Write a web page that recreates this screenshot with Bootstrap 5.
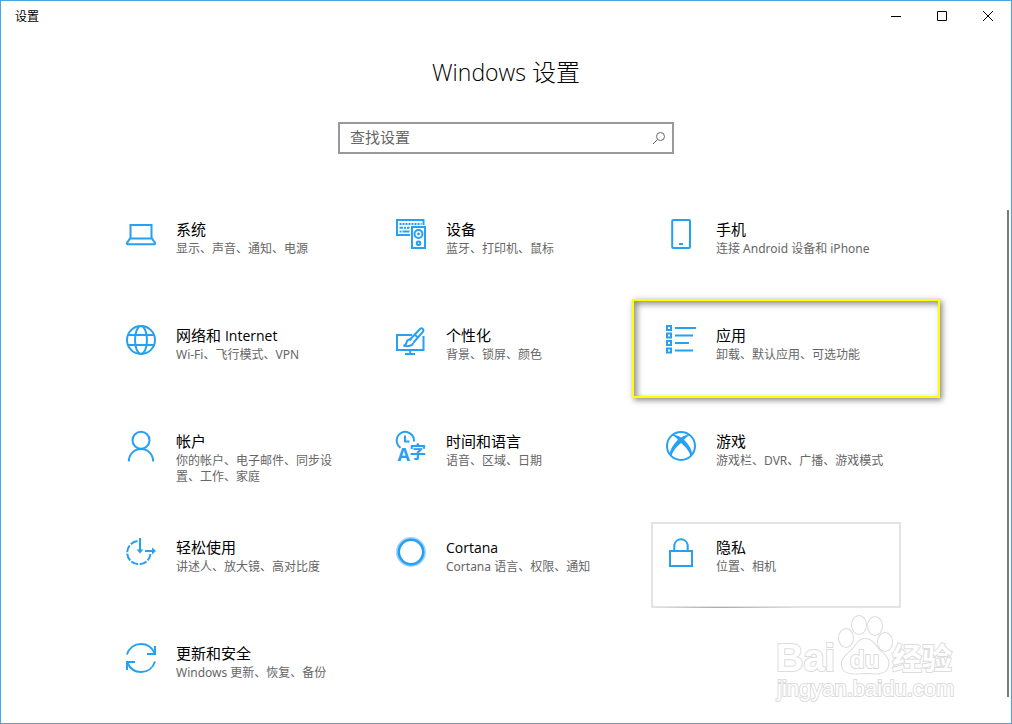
<!DOCTYPE html>
<html lang="zh-CN">
<head>
<meta charset="utf-8">
<meta name="viewport" content="width=device-width, initial-scale=1">
<title>设置</title>
<link href="https://cdn.jsdelivr.net/npm/bootstrap@5.3.0/dist/css/bootstrap.min.css" rel="stylesheet">
<style>
  body { font-family: "Open Sans", "Noto Sans CJK SC", sans-serif; color: #000; background: #fff; }
  .app-window { min-height: 100vh; border: 1px solid #46a6e4; }
  .title-text { font-size: 12px; line-height: 32px; padding-left: 14px; }
  .win-btn { width: 46px; height: 30px; border: 0; background: none; padding: 0; }
  .win-btn svg { width: 10px; height: 10px; fill: none; stroke: #000; display: block; margin: auto; }
  .page-title { font-size: 23px; line-height: 32px; font-weight: 300; margin: 23px 0 34px; }
  .page-title span { font-family: "Noto Sans CJK SC", sans-serif; font-size: 24px; line-height: 24px; }
  .search-box { width: 336px; max-width: 90%; height: 32px; border: 2px solid #999; }
  .search-box input { font-size: 15px; line-height: 20px; border: 0; outline: 0; padding: 0 10px 2px; color: #000; background: none; min-width: 0; }
  .search-box input::placeholder { color: #666; opacity: 1; }
  .search-btn { width: 26px; border: 0; padding: 0; background: none; }
  .search-btn svg { width: 14px; height: 14px; display: block; fill: none; stroke: #666; margin: auto; }
  .tiles { display: grid; grid-template-columns: repeat(auto-fill, 250px); gap: 20px; justify-content: center; margin-top: 50px; padding: 0 24px 6px; }
  .tile { min-height: 86px; padding: 15px 12px 5px 15px; gap: 20px; color: #000; }
  .tile-icon { width: 30px; height: 30px; flex: none; fill: none; stroke: #25a0f2; stroke-width: 2; overflow: visible; }
  .tile-icon .solid { fill: #25a0f2; stroke: none; }
  .tile-icon text { fill: #25a0f2; stroke: none; font-weight: 700; }
  .tile-name { font-size: 15px; line-height: 20px; margin-bottom: 2px; }
  .tile-name span { font-size: 14px; line-height: 14px; }
  .tile-info { font-family: "Noto Sans", "Noto Sans CJK SC", sans-serif; font-size: 12px; line-height: 16px; color: #666; }
  .tile-hover { border: 2px solid #e3e3e3; padding: 13px 10px 3px 13px; }
  .tile-hover::after { content: ""; position: absolute; left: 0; right: 40%; bottom: -2px; height: 1px; background: linear-gradient(90deg, #e3e3e3, #aaa 45%, #e3e3e3); }
  .marker { left: -19px; top: -11px; right: -39px; bottom: -2px; border: 2px solid #ff0; box-shadow: 2px 2px 6px rgba(0,0,0,.5), inset 3px 3px 6px rgba(0,0,0,.45); pointer-events: none; }
  .scroll-thumb { width: 2px; right: 2px; top: 209px; bottom: 26px; background: #7a7a7a; }
  .watermark { right: 50px; bottom: 18px; width: 190px; height: 94px; overflow: visible; pointer-events: none; }
  .watermark * { fill: #fff; stroke: #dcdcdc; stroke-width: 2; paint-order: stroke; }
</style>
</head>
<body>
<div class="app-window position-relative">
  <header class="d-flex justify-content-between">
    <div class="title-text">设置</div>
    <div class="d-flex">
      <button class="win-btn" type="button" aria-label="最小化"><svg viewBox="0 0 10 10"><path d="M0 5.5h10"/></svg></button>
      <button class="win-btn" type="button" aria-label="最大化"><svg viewBox="0 0 10 10"><path d="M.5.5h9v9h-9z"/></svg></button>
      <button class="win-btn" type="button" aria-label="关闭"><svg viewBox="0 0 10 10"><path d="M0 0l10 10M10 0L0 10"/></svg></button>
    </div>
  </header>

  <main>
    <h1 class="page-title text-center">Windows <span>设置</span></h1>
    <form class="search-box d-flex mx-auto" role="search">
      <input class="flex-grow-1" type="text" placeholder="查找设置" aria-label="查找设置">
      <button class="search-btn" type="button" aria-label="搜索"><svg viewBox="0 0 14 14"><circle cx="8.5" cy="5.5" r="4"/><path d="M5.500 8.500L1 13"/></svg></button>
    </form>

    <nav class="tiles" aria-label="设置类别">
      <a class="tile d-flex text-decoration-none" href="#">
        <svg class="tile-icon" viewBox="0 0 30 30"><path d="M4.500 19V6h21v13M4 19.500h22l3 4.500c.3.800 0 1.200-.8 1.200H1.800C1 25.200.7 24.800 1 24z"/></svg>
        <div><div class="tile-name">系统</div><div class="tile-info">显示、声音、通知、电源</div></div>
      </a>
      <a class="tile d-flex text-decoration-none" href="#">
        <svg class="tile-icon" viewBox="0 0 30 30"><path d="M14 16H1V1h26.500v5"/><path d="M3.500 5h22" stroke-dasharray="2 1"/><path d="M3.500 8.700h10" stroke-dasharray="3.500 1 2 1"/><path d="M3.500 12.500h10" stroke-dasharray="2 1 7 1"/><path d="M16 8h13v21H16z"/><circle cx="22.500" cy="15" r="4"/><circle class="solid" cx="22.500" cy="15" r="1.400"/><circle cx="22.500" cy="24.300" r="1.800"/></svg>
        <div><div class="tile-name">设备</div><div class="tile-info">蓝牙、打印机、鼠标</div></div>
      </a>
      <a class="tile d-flex text-decoration-none" href="#">
        <svg class="tile-icon" viewBox="0 0 30 30"><rect x="6.200" y="1" width="17.800" height="28" rx="1"/><path d="M13 25h4"/></svg>
        <div><div class="tile-name">手机</div><div class="tile-info">连接 Android 设备和 iPhone</div></div>
      </a>

      <a class="tile d-flex text-decoration-none" href="#">
        <svg class="tile-icon" viewBox="0 0 30 30"><circle cx="15" cy="15" r="14"/><ellipse cx="15" cy="15" rx="6" ry="14"/><path d="M2 10h26M2 20h26"/></svg>
        <div><div class="tile-name">网络和 <span>Internet</span></div><div class="tile-info">Wi-Fi、飞行模式、VPN</div></div>
      </a>
      <a class="tile d-flex text-decoration-none" href="#">
        <svg class="tile-icon" viewBox="0 0 30 30"><path d="M16 10H1v15h26.500V11M14.200 25v4M9 29h10"/><path d="M14 14.500L24 4c2-1.800 4.500.5 2.800 2.800L17.500 17.500M18.500 9.500l4 3.500"/><path d="M15.500 15c-2.500-1.200-4.500.2-5 2.500-.3 1.800-1.300 3-3 3.300 4.500 1 9.500.2 9.700-3.300"/></svg>
        <div><div class="tile-name">个性化</div><div class="tile-info">背景、锁屏、颜色</div></div>
      </a>
      <a class="tile d-flex text-decoration-none position-relative" href="#">
        <svg class="tile-icon" viewBox="0 0 30 30"><path d="M1 1h4v4H1zM1 8.500h4v4H1zM1 16h4v4H1zM1 23.500h4v4H1z"/><path d="M9 3h21M9 10.500h18M9 18h14M9 25.500h18"/></svg>
        <div><div class="tile-name">应用</div><div class="tile-info">卸载、默认应用、可选功能</div></div>
        <span class="marker position-absolute"></span>
      </a>

      <a class="tile d-flex text-decoration-none" href="#">
        <svg class="tile-icon" viewBox="0 0 30 30"><circle cx="15" cy="9.300" r="8.500"/><path d="M2.800 30.500c0-7 5.200-12.500 12.200-12.500s12.200 5.500 12.200 12.500"/></svg>
        <div><div class="tile-name">帐户</div><div class="tile-info">你的帐户、电子邮件、同步设置、工作、家庭</div></div>
      </a>
      <a class="tile d-flex text-decoration-none" href="#">
        <svg class="tile-icon" viewBox="0 0 30 30"><path d="M4.500 16.800A8.700 8.700 0 1 1 18 10.500M9 4.500v6h4.500"/><text x="1.500" y="30" font-size="18" font-family="Open Sans">A</text><text x="13.500" y="26.500" font-size="16.500" font-family="Noto Sans CJK SC">字</text></svg>
        <div><div class="tile-name">时间和语言</div><div class="tile-info">语音、区域、日期</div></div>
      </a>
      <a class="tile d-flex text-decoration-none" href="#">
        <svg class="tile-icon" viewBox="0 0 30 30"><circle cx="15" cy="15" r="14"/><path class="solid" d="M6 4.500C8.500 3.200 12 4.500 15 6.500 18 4.500 21.500 3.200 24 4.500c-2.200.3-4.300 2-6 4.200 4.500 4.500 8.200 10 8.200 15.300l-1.500 1.500C23.500 20.500 19.500 15.500 15 12 10.500 15.500 6.500 20.500 5.300 25.500L3.800 24c0-5.300 3.700-10.800 8.200-15.300C10.300 6.500 8.200 4.800 6 4.500z"/></svg>
        <div><div class="tile-name">游戏</div><div class="tile-info">游戏栏、DVR、广播、游戏模式</div></div>
      </a>

      <a class="tile d-flex text-decoration-none" href="#">
        <svg class="tile-icon" viewBox="0 0 30 30"><path d="M11.500 4A11.700 11.700 0 1 0 24.500 17" stroke-dasharray="7.500 1.500"/><path d="M14 1v13.500M19 14h10"/><path class="solid" d="M10.500 12.500h7L14 16.500zM26 10.500v7l4-3.500z"/></svg>
        <div><div class="tile-name">轻松使用</div><div class="tile-info">讲述人、放大镜、高对比度</div></div>
      </a>
      <a class="tile d-flex text-decoration-none" href="#">
        <svg class="tile-icon" viewBox="0 0 30 30"><circle cx="15" cy="15" r="14" stroke="#9fd5fa"/><circle cx="15" cy="15" r="12.200" stroke-width="2.600"/></svg>
        <div><div class="tile-name"><span>Cortana</span></div><div class="tile-info">Cortana 语言、权限、通知</div></div>
      </a>
      <a class="tile tile-hover d-flex text-decoration-none position-relative" href="#">
        <svg class="tile-icon" viewBox="0 0 30 30"><path d="M4 14h22v15H4zM8.300 14V8a6.800 6.800 0 0 1 13.400 0v6"/></svg>
        <div><div class="tile-name">隐私</div><div class="tile-info">位置、相机</div></div>
      </a>

      <a class="tile d-flex text-decoration-none" href="#">
        <svg class="tile-icon" viewBox="0 0 30 30"><path d="M1 11.500C3 5 8.500 1 15 1s11 3.500 13.500 9M29 3v8h-8M29 18.500C27 25 21.500 29 15 29S4 25.500 1.500 20M1 27v-8h8"/></svg>
        <div><div class="tile-name">更新和安全</div><div class="tile-info">Windows 更新、恢复、备份</div></div>
      </a>
    </nav>
  </main>

  <div class="scroll-thumb position-absolute"></div>
  <svg class="watermark position-absolute" viewBox="0 0 190 94">
    <text x="5" y="60" font-family="Liberation Sans" font-weight="700" font-size="38">Bai</text>
    <ellipse cx="75" cy="27" rx="7" ry="9"/><ellipse cx="88" cy="14" rx="7" ry="9"/><ellipse cx="104" cy="15" rx="7" ry="9"/><ellipse cx="114" cy="31" rx="7" ry="9"/>
    <path d="M94 28c8 0 10 7 15 12 6 5 10 9 8 15-2 8-9 8-23 7-14 1-21 1-23-7-1-6 3-10 9-15 5-5 7-12 14-12z"/>
    <text x="79" y="57" font-family="Liberation Sans" font-weight="700" font-size="24">du</text>
    <text x="121" y="58" font-family="Noto Sans CJK SC" font-weight="700" font-size="30">经验</text>
    <text x="6" y="85" font-family="Liberation Sans" font-weight="400" font-size="22">jingyan.baidu.com</text>
  </svg>
</div>
<script src="https://cdn.jsdelivr.net/npm/bootstrap@5.3.0/dist/js/bootstrap.bundle.min.js"></script>
</body>
</html>
